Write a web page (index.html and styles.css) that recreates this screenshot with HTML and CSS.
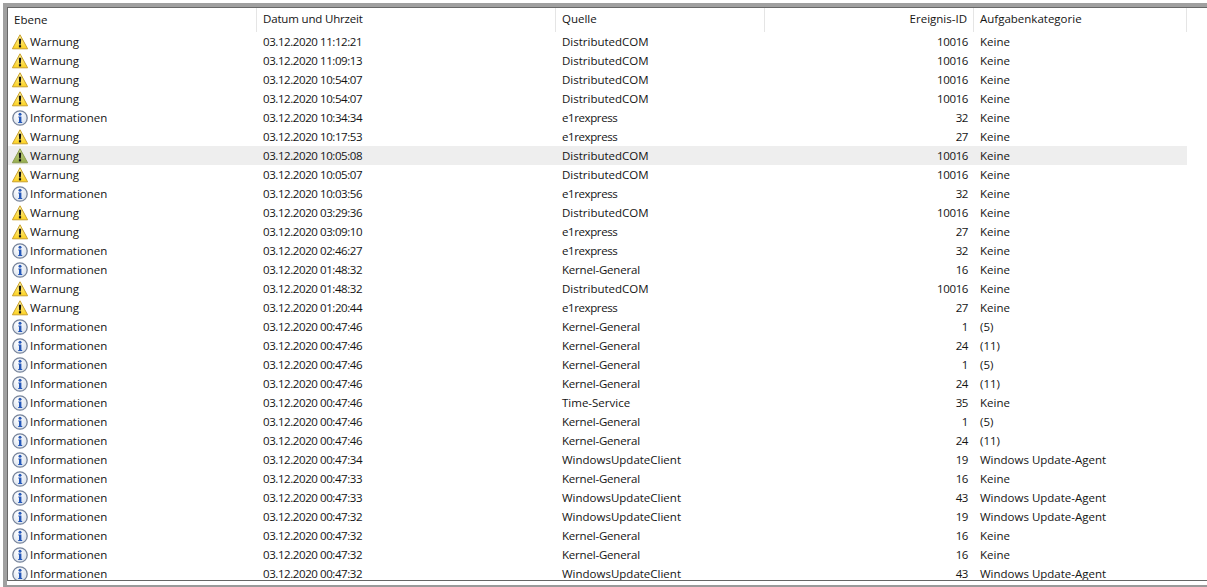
FILE: index.html
```html
<!DOCTYPE html>
<html lang="de">
<head>
<meta charset="utf-8">
<title>Ereignisanzeige</title>
<link rel="stylesheet" href="styles.css">
</head>
<body>
<svg class="defs" width="0" height="0" aria-hidden="true">
  <defs>
    <linearGradient id="wy" x1="0" y1="0" x2="0" y2="1"><stop offset="0" stop-color="#fff6a8"/><stop offset="1" stop-color="#fdd21f"/></linearGradient>
    <linearGradient id="wg" x1="0" y1="0" x2="0" y2="1"><stop offset="0" stop-color="#cdd890"/><stop offset="1" stop-color="#96ad4c"/></linearGradient>
    <radialGradient id="ib" cx=".4" cy=".3" r=".8"><stop offset="0" stop-color="#ffffff"/><stop offset="1" stop-color="#d4deec"/></radialGradient>
    <symbol id="warn" viewBox="0 0 16 16"><path d="M8 .8 L15.6 14.8 H.4 Z" fill="url(#wy)" stroke="#c9a02c" stroke-width="1" stroke-linejoin="round"/><path d="M6.8 4.8h2.4l-.4 5.8H7.2z" fill="#111"/><rect x="6.9" y="11.2" width="2.2" height="2.2" fill="#111"/></symbol>
    <symbol id="warn-sel" viewBox="0 0 16 16"><path d="M8 .8 L15.6 14.8 H.4 Z" fill="url(#wg)" stroke="#8a9c50" stroke-width="1" stroke-linejoin="round"/><path d="M6.8 4.8h2.4l-.4 5.8H7.2z" fill="#111"/><rect x="6.9" y="11.2" width="2.2" height="2.2" fill="#111"/></symbol>
    <symbol id="info" viewBox="0 0 16 16"><circle cx="8" cy="8" r="7.2" fill="url(#ib)" stroke="#76839a" stroke-width="1.3"/><circle cx="8" cy="4.3" r="1.5" fill="#2457b8"/><path d="M6.3 6.6H9.4V12H10.2V13H6.2V12H7V7.6H6.3Z" fill="#2457b8"/></symbol>
  </defs>
</svg>
<div class="window">
<main class="list">
  <div class="row head"><span class="level">Ebene</span><span>Datum und Uhrzeit</span><span>Quelle</span><span class="num">Ereignis-ID</span><span>Aufgabenkategorie</span></div>
  <div class="row"><span class="level"><svg class="ico"><use href="#warn"/></svg>Warnung</span><span>03.12.2020 11:12:21</span><span>DistributedCOM</span><span class="num">10016</span><span>Keine</span></div>
  <div class="row"><span class="level"><svg class="ico"><use href="#warn"/></svg>Warnung</span><span>03.12.2020 11:09:13</span><span>DistributedCOM</span><span class="num">10016</span><span>Keine</span></div>
  <div class="row"><span class="level"><svg class="ico"><use href="#warn"/></svg>Warnung</span><span>03.12.2020 10:54:07</span><span>DistributedCOM</span><span class="num">10016</span><span>Keine</span></div>
  <div class="row"><span class="level"><svg class="ico"><use href="#warn"/></svg>Warnung</span><span>03.12.2020 10:54:07</span><span>DistributedCOM</span><span class="num">10016</span><span>Keine</span></div>
  <div class="row"><span class="level"><svg class="ico"><use href="#info"/></svg>Informationen</span><span>03.12.2020 10:34:34</span><span class="tight">e1rexpress</span><span class="num">32</span><span>Keine</span></div>
  <div class="row"><span class="level"><svg class="ico"><use href="#warn"/></svg>Warnung</span><span>03.12.2020 10:17:53</span><span class="tight">e1rexpress</span><span class="num">27</span><span>Keine</span></div>
  <div class="row selected"><span class="level"><svg class="ico"><use href="#warn-sel"/></svg>Warnung</span><span>03.12.2020 10:05:08</span><span>DistributedCOM</span><span class="num">10016</span><span>Keine</span></div>
  <div class="row"><span class="level"><svg class="ico"><use href="#warn"/></svg>Warnung</span><span>03.12.2020 10:05:07</span><span>DistributedCOM</span><span class="num">10016</span><span>Keine</span></div>
  <div class="row"><span class="level"><svg class="ico"><use href="#info"/></svg>Informationen</span><span>03.12.2020 10:03:56</span><span class="tight">e1rexpress</span><span class="num">32</span><span>Keine</span></div>
  <div class="row"><span class="level"><svg class="ico"><use href="#warn"/></svg>Warnung</span><span>03.12.2020 03:29:36</span><span>DistributedCOM</span><span class="num">10016</span><span>Keine</span></div>
  <div class="row"><span class="level"><svg class="ico"><use href="#warn"/></svg>Warnung</span><span>03.12.2020 03:09:10</span><span class="tight">e1rexpress</span><span class="num">27</span><span>Keine</span></div>
  <div class="row"><span class="level"><svg class="ico"><use href="#info"/></svg>Informationen</span><span>03.12.2020 02:46:27</span><span class="tight">e1rexpress</span><span class="num">32</span><span>Keine</span></div>
  <div class="row"><span class="level"><svg class="ico"><use href="#info"/></svg>Informationen</span><span>03.12.2020 01:48:32</span><span class="kern">Kernel-General</span><span class="num">16</span><span>Keine</span></div>
  <div class="row"><span class="level"><svg class="ico"><use href="#warn"/></svg>Warnung</span><span>03.12.2020 01:48:32</span><span>DistributedCOM</span><span class="num">10016</span><span>Keine</span></div>
  <div class="row"><span class="level"><svg class="ico"><use href="#warn"/></svg>Warnung</span><span>03.12.2020 01:20:44</span><span class="tight">e1rexpress</span><span class="num">27</span><span>Keine</span></div>
  <div class="row"><span class="level"><svg class="ico"><use href="#info"/></svg>Informationen</span><span>03.12.2020 00:47:46</span><span class="kern">Kernel-General</span><span class="num">1</span><span>(5)</span></div>
  <div class="row"><span class="level"><svg class="ico"><use href="#info"/></svg>Informationen</span><span>03.12.2020 00:47:46</span><span class="kern">Kernel-General</span><span class="num">24</span><span>(11)</span></div>
  <div class="row"><span class="level"><svg class="ico"><use href="#info"/></svg>Informationen</span><span>03.12.2020 00:47:46</span><span class="kern">Kernel-General</span><span class="num">1</span><span>(5)</span></div>
  <div class="row"><span class="level"><svg class="ico"><use href="#info"/></svg>Informationen</span><span>03.12.2020 00:47:46</span><span class="kern">Kernel-General</span><span class="num">24</span><span>(11)</span></div>
  <div class="row"><span class="level"><svg class="ico"><use href="#info"/></svg>Informationen</span><span>03.12.2020 00:47:46</span><span>Time-Service</span><span class="num">35</span><span>Keine</span></div>
  <div class="row"><span class="level"><svg class="ico"><use href="#info"/></svg>Informationen</span><span>03.12.2020 00:47:46</span><span class="kern">Kernel-General</span><span class="num">1</span><span>(5)</span></div>
  <div class="row"><span class="level"><svg class="ico"><use href="#info"/></svg>Informationen</span><span>03.12.2020 00:47:46</span><span class="kern">Kernel-General</span><span class="num">24</span><span>(11)</span></div>
  <div class="row"><span class="level"><svg class="ico"><use href="#info"/></svg>Informationen</span><span>03.12.2020 00:47:34</span><span>WindowsUpdateClient</span><span class="num">19</span><span>Windows Update-Agent</span></div>
  <div class="row"><span class="level"><svg class="ico"><use href="#info"/></svg>Informationen</span><span>03.12.2020 00:47:33</span><span class="kern">Kernel-General</span><span class="num">16</span><span>Keine</span></div>
  <div class="row"><span class="level"><svg class="ico"><use href="#info"/></svg>Informationen</span><span>03.12.2020 00:47:33</span><span>WindowsUpdateClient</span><span class="num">43</span><span>Windows Update-Agent</span></div>
  <div class="row"><span class="level"><svg class="ico"><use href="#info"/></svg>Informationen</span><span>03.12.2020 00:47:32</span><span>WindowsUpdateClient</span><span class="num">19</span><span>Windows Update-Agent</span></div>
  <div class="row"><span class="level"><svg class="ico"><use href="#info"/></svg>Informationen</span><span>03.12.2020 00:47:32</span><span class="kern">Kernel-General</span><span class="num">16</span><span>Keine</span></div>
  <div class="row"><span class="level"><svg class="ico"><use href="#info"/></svg>Informationen</span><span>03.12.2020 00:47:32</span><span class="kern">Kernel-General</span><span class="num">16</span><span>Keine</span></div>
  <div class="row"><span class="level"><svg class="ico"><use href="#info"/></svg>Informationen</span><span>03.12.2020 00:47:32</span><span>WindowsUpdateClient</span><span class="num">43</span><span>Windows Update-Agent</span></div>
</main>
</div>
</body>
</html>
```
FILE: styles.css
```css
html, body {
  margin: 0;
  height: 100%;
  background: #fff;
  overflow: hidden;
}
.defs { position: absolute; }
.window {
  box-sizing: border-box;
  height: 584px;
  margin: 3px 0 0 3px;
  background: #fff;
  border-top: 4px solid #a0a0a0;
  border-left: 4px solid #a0a0a0;
  border-bottom: 2px solid #9a9a9a;
}
.list {
  box-sizing: border-box;
  height: 574px;
  overflow: hidden;
  box-shadow: inset 1px 1px 0 #686868;
  border-bottom: 1px solid #666;
  padding: 1px 0 0 1px;
  font-family: "Open Sans", "Noto Sans", sans-serif;
  font-size: 11.5px;
  color: #141414;
}
.row {
  display: grid;
  grid-template-columns: 249px 299px 209px 209px 213px;
  width: 1179px;
  height: 19px;
  align-items: center;
  white-space: nowrap;
}
.row > span { padding-left: 6px; overflow: hidden; }
.row > span:nth-child(2) { letter-spacing: -0.42px; }
.row > .tight { letter-spacing: -0.4px; }
.row > .kern { letter-spacing: -0.2px; }
.row > .num { padding: 0 6px 0 0; text-align: right; letter-spacing: -0.4px; }
.row > .level { display: flex; align-items: center; padding-left: 4px; }
.ico { width: 16px; height: 16px; margin-right: 2px; flex: none; }
.head { height: 24px; }
.head > span {
  height: 24px;
  line-height: 22px;
  border-right: 1px solid #e5e5e5;
  box-sizing: border-box;
}
.head > .level { padding-left: 6px; }
.head > span:nth-child(2) { letter-spacing: -0.17px; }
.head > .num { letter-spacing: 0; }
.selected { background: #eeeeee; }
```
